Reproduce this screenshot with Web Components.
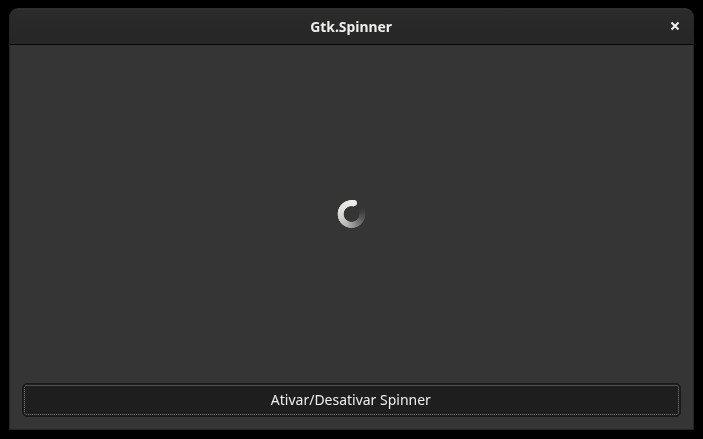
<!DOCTYPE html>
<html lang="pt">
<head>
<meta charset="utf-8">
<title>Gtk.Spinner</title>
<style>
html, body { margin: 0; height: 100%; background: #000; overflow: hidden; }
body { font-family: "Noto Sans", "Open Sans", sans-serif; color: #eeeeec; }
</style>
</head>
<body>
<gtk-window>
  <gtk-header-bar slot="header">Gtk.Spinner</gtk-header-bar>
  <gtk-spinner></gtk-spinner>
  <gtk-button slot="action">Ativar/Desativar Spinner</gtk-button>
</gtk-window>
<script>
const define = (name, html) => customElements.define(name, class extends HTMLElement {
  constructor() {
    super();
    this.attachShadow({ mode: "open" }).innerHTML = html;
  }
});

define("gtk-window", `
<style>
:host { display: block; box-sizing: border-box; height: 439px; padding: 8px 9px 9px; }
.frame { box-sizing: border-box; height: 422px; display: flex; flex-direction: column;
  border: 1px solid #242424; border-top-color: #2d2d2d; border-radius: 9px 9px 0 0;
  background: #353535; overflow: hidden; }
.content { flex: 1; display: flex; flex-direction: column; padding: 0 12px 12px; }
.center { flex: 1; display: flex; align-items: center; justify-content: center; }
</style>
<div class="frame">
  <slot name="header"></slot>
  <div class="content">
    <div class="center"><slot></slot></div>
    <slot name="action"></slot>
  </div>
</div>`);

define("gtk-header-bar", `
<style>
:host { display: grid; grid-template-columns: 36px 1fr 36px; align-items: center; flex: none;
  box-sizing: border-box; height: 36px; border-bottom: 1px solid #070707;
  background: linear-gradient(#2b2b2b, #262626); box-shadow: inset 0 1px #303030; }
.title { grid-column: 2; text-align: center; font-size: 15px; font-weight: 700; line-height: 20px; padding: 0 1px 2px 0; white-space: nowrap; }
.title span { display: inline-block; transform: scaleX(.927); }
svg { display: block; justify-self: center; }
</style>
<div class="title"><span><slot></slot></span></div>
<svg width="16" height="16" viewBox="0 0 16 16"><path d="M4.5 3.5l7 7M11.5 3.5l-7 7" stroke="#eeeeec" stroke-width="2.1" fill="none"/></svg>`);

define("gtk-spinner", `
<style>
:host { display: block; width: 29px; height: 28px; }
.box { position: relative; width: 29px; height: 28px; }
.ring { width: 29px; height: 28px;
  background: conic-gradient(from 15deg, transparent 0 12%, rgba(238,238,236,.06) 18%, rgba(238,238,236,.2) 28%, rgba(238,238,236,.46) 40%, rgba(238,238,236,.72) 54%, rgba(238,238,236,.9) 72%, #eeeeec 100%);
  -webkit-mask: radial-gradient(circle at center, transparent 7.4px, #000 8.2px, #000 13.6px, transparent 14.2px);
  mask: radial-gradient(circle at center, transparent 7.4px, #000 8.2px, #000 13.6px, transparent 14.2px); }
.cap { position: absolute; left: 14px; top: .4px; width: 6px; height: 6px; border-radius: 50%; background: #eeeeec; }
</style>
<div class="box"><div class="ring"></div><div class="cap"></div></div>`);

define("gtk-button", `
<style>
:host { display: flex; align-items: center; justify-content: center; flex: none; position: relative;
  box-sizing: border-box; height: 34px; border: 1px solid #1a1a1a; border-radius: 5px; background: #1e1e1e; }
span { font-size: 15px; line-height: 20px; padding: 0 1px 2px 0; white-space: nowrap; transform: scaleX(.932); }
svg { position: absolute; inset: 0; width: 100%; height: 100%; }
rect { x: 1.5px; y: 1.5px; width: calc(100% - 3px); height: calc(100% - 3px); }
</style>
<svg><rect rx="2" fill="none" stroke="#828282" stroke-width="1" stroke-dasharray="1 1"/></svg>
<span><slot></slot></span>`);
</script>
</body>
</html>
